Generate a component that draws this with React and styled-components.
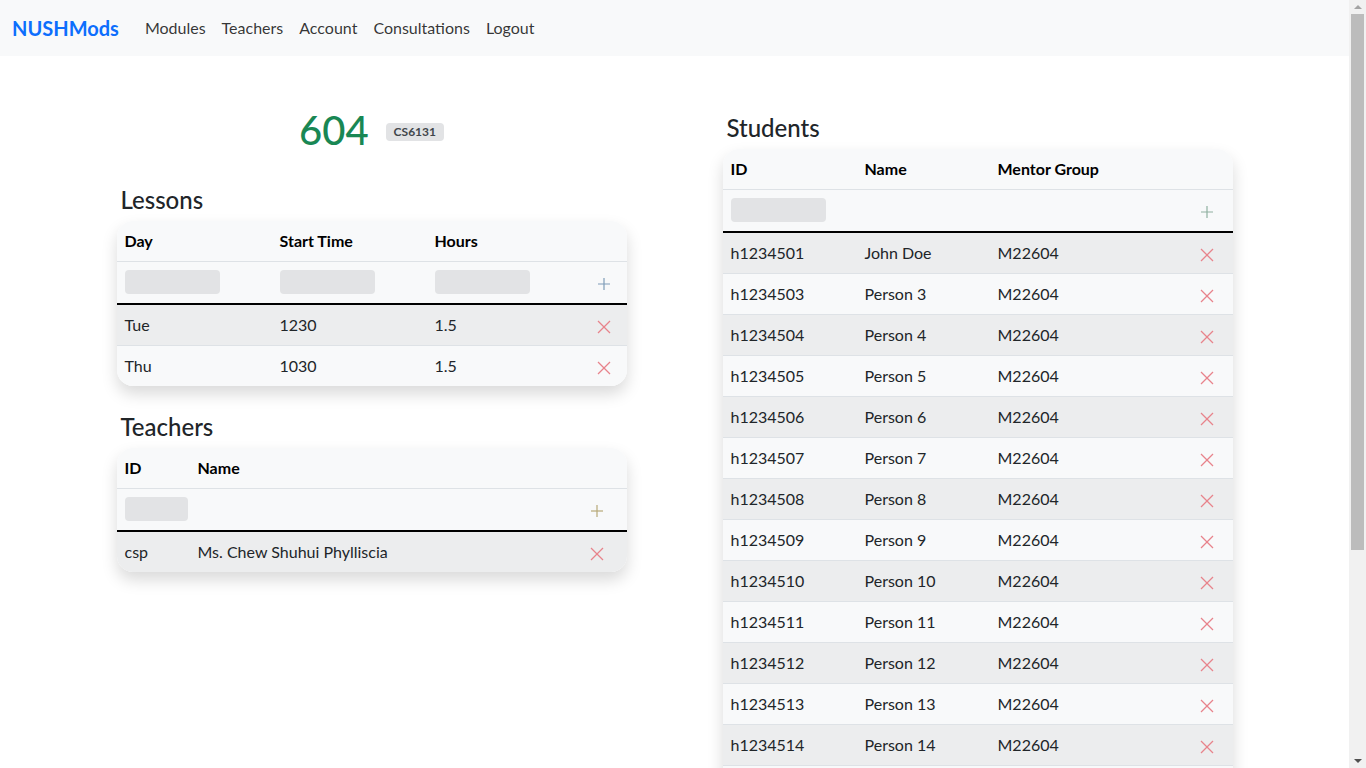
import React from 'react';
import styled, { createGlobalStyle } from 'styled-components';

const GlobalStyle = createGlobalStyle`
  html::-webkit-scrollbar { display: none; }
  body {
    margin: 0;
    font-family: Lato, "Noto Sans", "Liberation Sans", sans-serif;
    font-size: 16px;
    line-height: 1.5;
    color: #212529;
    background: #fff;
  }
  * { box-sizing: border-box; }
`;

const Page = styled.div`
  width: calc(100vw - 17px);
`;

const Scrollbar = styled.div`
  position: fixed;
  top: 0;
  right: 0;
  width: 17px;
  height: 100vh;
  background: #f1f1f1;
  display: flex;
  flex-direction: column;
  align-items: center;
`;

const Arrow = styled.div`
  width: 0;
  height: 0;
  margin: 5px 0;
  border-left: 4px solid transparent;
  border-right: 4px solid transparent;
  ${p => (p.$down ? 'border-top: 4px solid #505050;' : 'border-bottom: 4px solid #a3a3a3;')}
`;

const Thumb = styled.div`
  width: 13px;
  height: 536px;
  background: #bcbcbc;
`;

const Spacer = styled.div`
  flex: 1;
`;

const Navbar = styled.nav`
  display: flex;
  align-items: center;
  height: 56px;
  padding: 0 12px;
  background-color: #f8f9fa;
`;

const Brand = styled.a`
  font-size: 20px;
  font-weight: 700;
  color: #0d6efd;
  margin-right: 18px;
  line-height: 30px;
  text-decoration: none;
`;

const NavLink = styled.a`
  padding: 8px;
  color: rgba(0, 0, 0, 0.8);
  text-decoration: none;
`;

const Main = styled.main`
  width: 1116px;
  margin: 0 auto;
  padding: 50px 0 40px;
  display: flex;
  justify-content: space-between;
  align-items: flex-start;
`;

const Column = styled.section`
  width: 510px;
  display: flex;
  flex-direction: column;
`;

const TitleRow = styled.div`
  display: flex;
  align-items: center;
  justify-content: center;
  gap: 17px;
  margin-bottom: 32px;
`;

const Code = styled.h1`
  margin: 0;
  font-size: 40px;
  font-weight: 500;
  line-height: 1.2;
  color: #198754;
`;

const Badge = styled.span`
  font-size: 12px;
  font-weight: 700;
  line-height: 12px;
  margin-top: 3px;
  padding: 3px 8px;
  border-radius: 4px;
  background: #e2e3e5;
  color: #41464b;
`;

const Heading = styled.h4`
  margin: ${p => p.$top || 0}px 0 6px 4px;
  font-size: 24px;
  font-weight: 500;
  line-height: 1.2;
`;

const Card = styled.div`
  border-radius: 16px;
  overflow: hidden;
  box-shadow: 0 8px 16px rgba(0, 0, 0, 0.15);
  margin-bottom: 24px;
`;

const Table = styled.table`
  width: 100%;
  border-collapse: collapse;
  table-layout: fixed;
  color: #000;
`;

const Th = styled.th`
  text-align: left;
  font-weight: 700;
  padding: 8px;
  background: #f8f9fa;
  border-bottom: 1px solid #dee2e6;
`;

const Td = styled.td`
  padding: ${p => (p.$tall ? '8px 8px 9px' : '8px')};
  height: ${p => (p.$tall ? 41 : 40)}px;
  background: ${p => (p.$odd ? '#ecedee' : '#f8f9fa')};
  color: #212529;
  text-align: ${p => (p.$center ? 'center' : 'left')};
  vertical-align: middle;
`;

const Tr = styled.tr`
  border-bottom: 1px solid #dee2e6;
  &:last-child { border-bottom: none; }
`;

const Body = styled.tbody`
  border-top: 2px solid #000;
`;

const Field = styled.div`
  width: ${p => p.$w}px;
  height: 24px;
  border-radius: 4px;
  background: #e2e3e5;
`;

const IconButton = styled.span`
  display: inline-flex;
  vertical-align: middle;
  cursor: pointer;
`;

const PlusIcon = ({ color }) => (
  <IconButton>
    <svg width="14" height="14" viewBox="0 0 14 14">
      <line x1="7" y1="1" x2="7" y2="13" stroke={color} strokeWidth="1.2" />
      <line x1="1" y1="7" x2="13" y2="7" stroke={color} strokeWidth="1.2" />
    </svg>
  </IconButton>
);

const XIcon = () => (
  <IconButton>
    <svg width="14" height="14" viewBox="0 0 14 14">
      <line x1="1" y1="1" x2="13" y2="13" stroke="#e8838b" strokeWidth="1.3" />
      <line x1="13" y1="1" x2="1" y2="13" stroke="#e8838b" strokeWidth="1.3" />
    </svg>
  </IconButton>
);

const lessons = [
  { day: 'Tue', start: '1230', hours: '1.5' },
  { day: 'Thu', start: '1030', hours: '1.5' },
];

const teachers = [{ id: 'csp', name: 'Ms. Chew Shuhui Phylliscia' }];

const students = [
  { id: 'h1234501', name: 'John Doe' },
  ...Array.from({ length: 18 }, (_, i) => ({
    id: `h12345${String(i + 3).padStart(2, '0')}`,
    name: `Person ${i + 3}`,
  })),
];

const App = () => (
  <Page>
    <GlobalStyle />
    <Navbar>
      <Brand href="#">NUSHMods</Brand>
      <NavLink href="#">Modules</NavLink>
      <NavLink href="#">Teachers</NavLink>
      <NavLink href="#">Account</NavLink>
      <NavLink href="#">Consultations</NavLink>
      <NavLink href="#">Logout</NavLink>
    </Navbar>
    <Main>
      <Column>
        <TitleRow>
          <Code>604</Code>
          <Badge>CS6131</Badge>
        </TitleRow>

        <Heading $top={0}>Lessons</Heading>
        <Card>
          <Table>
            <colgroup>
              <col style={{ width: 155 }} />
              <col style={{ width: 155 }} />
              <col style={{ width: 155 }} />
              <col style={{ width: 45 }} />
            </colgroup>
            <thead>
              <tr>
                <Th>Day</Th>
                <Th>Start Time</Th>
                <Th>Hours</Th>
                <Th />
              </tr>
              <tr>
                <Td $tall><Field $w={95} /></Td>
                <Td $tall><Field $w={95} /></Td>
                <Td $tall><Field $w={95} /></Td>
                <Td $tall $center><PlusIcon color="#7f9cb8" /></Td>
              </tr>
            </thead>
            <Body>
              {lessons.map((l, i) => (
                <Tr key={i}>
                  <Td $odd={i % 2 === 0}>{l.day}</Td>
                  <Td $odd={i % 2 === 0}>{l.start}</Td>
                  <Td $odd={i % 2 === 0}>{l.hours}</Td>
                  <Td $odd={i % 2 === 0} $center><XIcon /></Td>
                </Tr>
              ))}
            </Body>
          </Table>
        </Card>

        <Heading $top={3}>Teachers</Heading>
        <Card>
          <Table>
            <colgroup>
              <col style={{ width: 73 }} />
              <col style={{ width: 377 }} />
              <col style={{ width: 60 }} />
            </colgroup>
            <thead>
              <tr>
                <Th>ID</Th>
                <Th>Name</Th>
                <Th />
              </tr>
              <tr>
                <Td $tall><Field $w={63} /></Td>
                <Td $tall />
                <Td $tall $center><PlusIcon color="#b8a878" /></Td>
              </tr>
            </thead>
            <Body>
              {teachers.map((t, i) => (
                <Tr key={t.id}>
                  <Td $odd={i % 2 === 0}>{t.id}</Td>
                  <Td $odd={i % 2 === 0}>{t.name}</Td>
                  <Td $odd={i % 2 === 0} $center><XIcon /></Td>
                </Tr>
              ))}
            </Body>
          </Table>
        </Card>
      </Column>

      <Column>
        <Heading $top={8}>Students</Heading>
        <Card>
          <Table>
            <colgroup>
              <col style={{ width: 134 }} />
              <col style={{ width: 133 }} />
              <col style={{ width: 192 }} />
              <col style={{ width: 51 }} />
            </colgroup>
            <thead>
              <tr>
                <Th>ID</Th>
                <Th>Name</Th>
                <Th>Mentor Group</Th>
                <Th />
              </tr>
              <tr>
                <Td $tall><Field $w={95} /></Td>
                <Td $tall />
                <Td $tall />
                <Td $tall $center><PlusIcon color="#8fb0a0" /></Td>
              </tr>
            </thead>
            <Body>
              {students.map((s, i) => (
                <Tr key={s.id}>
                  <Td $odd={i % 2 === 0}>{s.id}</Td>
                  <Td $odd={i % 2 === 0}>{s.name}</Td>
                  <Td $odd={i % 2 === 0}>M22604</Td>
                  <Td $odd={i % 2 === 0} $center><XIcon /></Td>
                </Tr>
              ))}
            </Body>
          </Table>
        </Card>
      </Column>
    </Main>
    <Scrollbar>
      <Arrow />
      <Thumb />
      <Spacer />
      <Arrow $down />
    </Scrollbar>
  </Page>
);

export default App;
